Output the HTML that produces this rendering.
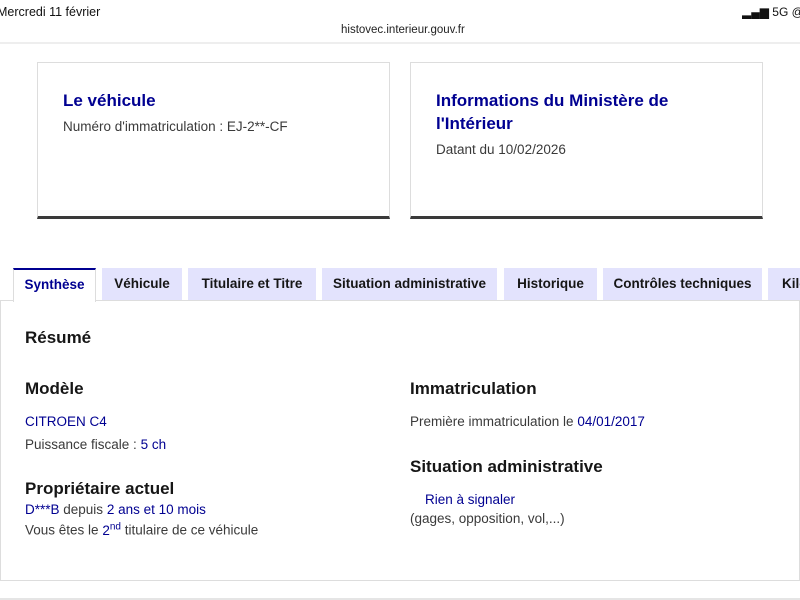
<!DOCTYPE html>
<html><head><meta charset="utf-8"><style>
*{margin:0;padding:0;box-sizing:border-box}
html,body{width:800px;height:600px;overflow:hidden}
body{background:#fff;font-family:"Liberation Sans",sans-serif;color:#3a3a3a;position:relative}
.a{position:absolute;white-space:nowrap}
.card{position:absolute;top:62px;height:157px;width:353px;border:1px solid #ddd;border-bottom:3px solid #3a3a3a}
.ct{position:absolute;left:25px;top:26px;font-size:17px;font-weight:bold;color:#000091;line-height:23px}
.cs{font-size:13.5px;color:#3a3a3a}
.tab{position:absolute;top:268px;height:32px;background:#e3e3fd;color:#161616;font-weight:bold;font-size:13.5px;line-height:32px;text-align:center;overflow:hidden;white-space:nowrap}
.b{color:#000091}
h3{font-size:17px;color:#161616}
</style></head><body>
<div class="a" style="left:-3px;top:5px;font-size:12.5px;color:#111">Mercredi 11 février</div>
<div class="a" style="left:341px;top:24px;font-size:11.5px;color:#222">histovec.interieur.gouv.fr</div>
<div class="a" style="left:742px;top:5px;width:58px;overflow:hidden;font-size:12px;color:#111">▂▄▆ 5G @ 5</div>
<div class="a" style="left:0;top:42px;width:800px;height:2px;background:#eee"></div>
<div class="card" style="left:37px"><div class="ct">Le véhicule</div><div class="a cs" style="left:25px;top:56px">Numéro d'immatriculation : EJ-2**-CF</div></div>
<div class="card" style="left:410px"><div class="ct">Informations du Ministère de<br>l'Intérieur</div><div class="a cs" style="left:25px;top:79px">Datant du 10/02/2026</div></div>
<div class="tab" style="left:13px;width:83px;background:#fff;color:#000091;border-top:2px solid #000091;border-left:1px solid #ddd;border-right:1px solid #ddd;height:34px;line-height:30px">Synthèse</div>
<div class="tab" style="left:102px;width:80px">Véhicule</div>
<div class="tab" style="left:188px;width:128px">Titulaire et Titre</div>
<div class="tab" style="left:322px;width:175px">Situation administrative</div>
<div class="tab" style="left:504px;width:93px">Historique</div>
<div class="tab" style="left:603px;width:159px">Contrôles techniques</div>
<div class="tab" style="left:768px;width:32px;text-align:left;padding-left:14px">Kilométrage</div>
<div class="a" style="left:0;top:300px;width:800px;height:281px;border:1px solid #ddd;z-index:-1"></div>
<div class="a" style="left:0;top:598px;width:800px;height:2px;background:#e5e5e5"></div>
<h3 class="a" style="left:25px;top:328px">Résumé</h3>
<h3 class="a" style="left:25px;top:379px">Modèle</h3>
<div class="a b" style="left:25px;top:414px;font-size:13.5px">CITROEN C4</div>
<div class="a" style="left:25px;top:437px;font-size:13.5px">Puissance fiscale : <span class="b">5 ch</span></div>
<h3 class="a" style="left:25px;top:479px">Propriétaire actuel</h3>
<div class="a" style="left:25px;top:502px;font-size:13.5px"><span class="b">D***B</span> depuis <span class="b">2 ans et 10 mois</span></div>
<div class="a" style="left:25px;top:521px;font-size:13.5px">Vous êtes le <span class="b">2<sup style="font-size:10px">nd</sup></span> titulaire de ce véhicule</div>
<h3 class="a" style="left:410px;top:379px">Immatriculation</h3>
<div class="a" style="left:410px;top:414px;font-size:13.5px">Première immatriculation le <span class="b">04/01/2017</span></div>
<h3 class="a" style="left:410px;top:457px">Situation administrative</h3>
<div class="a b" style="left:425px;top:492px;font-size:13.5px">Rien à signaler</div>
<div class="a" style="left:410px;top:511px;font-size:13.5px">(gages, opposition, vol,...)</div>
</body></html>
